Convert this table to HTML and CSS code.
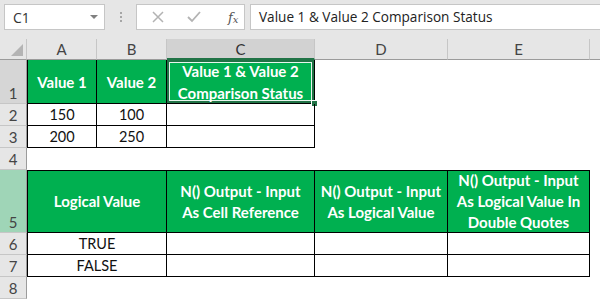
FILE: index.html
```html
<!DOCTYPE html>
<html>
<head>
<meta charset="utf-8">
<link rel="stylesheet" href="styles.css">
</head>
<body>
<div class="app">
  <div class="toolbar">
    <div class="namebox"><span class="name">C1</span><span class="dd"></span></div>
    <div class="grip"><i></i><i></i><i></i></div>
    <div class="btns">
      <svg class="ico" width="14" height="14" viewBox="0 0 14 14"><path d="M2 2 L12 12 M12 2 L2 12" stroke="#b3b3b3" stroke-width="1.5" fill="none"/></svg>
      <svg class="ico" width="16" height="14" viewBox="0 0 16 14"><path d="M2 7 L6 11 L14 2" stroke="#b3b3b3" stroke-width="1.8" fill="none"/></svg>
      <span class="fx">f<sub>x</sub></span>
    </div>
    <div class="formula">Value 1 &amp; Value 2 Comparison Status</div>
  </div>
  <div class="sheet">
    <div class="corner"><span class="tri"></span></div>
    <div class="ch">A</div>
    <div class="ch">B</div>
    <div class="ch sel">C</div>
    <div class="ch">D</div>
    <div class="ch">E</div>
    <div class="ch last"></div>

    <div class="rh rsel">1</div>
    <div class="c g la">Value 1</div>
    <div class="c g">Value 2</div>
    <div class="c g active">Value 1 &amp; Value 2<br>Comparison Status<span class="handle"></span></div>
    <div class="e"></div><div class="e"></div><div class="e"></div>

    <div class="rh">2</div>
    <div class="c la">150</div>
    <div class="c">100</div>
    <div class="c"></div>
    <div class="e"></div><div class="e"></div><div class="e"></div>

    <div class="rh">3</div>
    <div class="c la">200</div>
    <div class="c">250</div>
    <div class="c"></div>
    <div class="e"></div><div class="e"></div><div class="e"></div>

    <div class="rh">4</div>
    <div class="e span6"></div>

    <div class="rh rgreen">5</div>
    <div class="c g la t span2">Logical Value</div>
    <div class="c g t">N() Output - Input<br>As Cell Reference</div>
    <div class="c g t">N() Output - Input<br>As Logical Value</div>
    <div class="c g t">N() Output - Input<br>As Logical Value In<br>Double Quotes</div>
    <div class="e"></div>

    <div class="rh">6</div>
    <div class="c la span2">TRUE</div>
    <div class="c"></div><div class="c"></div><div class="c"></div>
    <div class="e"></div>

    <div class="rh">7</div>
    <div class="c la span2">FALSE</div>
    <div class="c"></div><div class="c"></div><div class="c"></div>
    <div class="e"></div>

    <div class="rh">8</div>
    <div class="e span6"></div>
  </div>
</div>
</body>
</html>
```
FILE: styles.css
```css
* { box-sizing: border-box; }
html, body { margin: 0; padding: 0; }
body { width: 600px; height: 299px; overflow: hidden; background: #fff; font-family: Lato, "Liberation Sans", sans-serif; }
.app { width: 600px; height: 299px; display: flex; flex-direction: column; }

.toolbar { height: 39px; background: #e6e6e6; display: flex; align-items: flex-start; padding-top: 4px; padding-left: 4px; }
.namebox { width: 101px; height: 26px; background: #fff; border: 1px solid #c6c6c6; display: flex; align-items: center; justify-content: space-between; padding: 0 6px 0 8px; }
.name { font-family: "Open Sans", sans-serif; font-size: 14px; color: #333; }
.dd { width: 0; height: 0; border-left: 4px solid transparent; border-right: 4px solid transparent; border-top: 4px solid #808080; }
.grip { width: 31px; height: 26px; display: flex; flex-direction: column; align-items: center; justify-content: center; gap: 2px; }
.grip i { display: block; width: 2px; height: 2px; background: #a6a6a6; }
.btns { width: 109px; height: 26px; background: #fff; border: 1px solid #c6c6c6; display: flex; align-items: center; padding-left: 14px; }
.btns .ico { margin-right: 21px; }
.btns .ico + .ico { margin-right: 26px; }
.fx { font-family: "DejaVu Serif", serif; font-style: italic; font-size: 13px; color: #555; }
.fx sub { font-size: 10px; vertical-align: -1px; }
.formula { margin-left: 5px; flex: 1; height: 26px; background: #fff; border: 1px solid #c6c6c6; border-right: none; font-family: "Open Sans", sans-serif; font-size: 13.6px; color: #222; padding-left: 8px; line-height: 23px; }

.sheet { flex: 1; display: grid; grid-template-columns: 27px 70px 70px 148px 133px 142px 10px; grid-template-rows: 21px 44px 22px 22px 22px 63px 22px 22px 22px; }
.corner { background: #e6e6e6; border-right: 1px solid #c6c6c6; border-bottom: 1px solid #9b9b9b; position: relative; }
.tri { position: absolute; right: 3px; bottom: 3px; width: 0; height: 0; border-left: 12px solid transparent; border-bottom: 12px solid #b4b4b4; }
.ch { background: #e6e6e6; border-right: 1px solid #c6c6c6; border-bottom: 1px solid #9b9b9b; text-align: center; font-size: 15px; color: #444; line-height: 21px; }
.ch.sel { background: #d2d2d2; border-bottom: 2px solid #217346; color: #333; }
.ch.last { border-right: none; }
.rh { background: #e6e6e6; border-right: 1px solid #9b9b9b; border-bottom: 1px solid #c6c6c6; text-align: center; font-size: 15px; color: #444; display: flex; align-items: flex-end; justify-content: center; line-height: 20px; }
.rh.rsel { background: #d6d6d6; }
.rh.rgreen { background: #9fd5b7; }

.c { border-right: 1px solid #000; border-bottom: 1px solid #000; display: flex; align-items: center; justify-content: center; text-align: center; font-size: 14.5px; color: #111; position: relative; }
.c.la { border-left: 1px solid #000; }
.c.t { border-top: 1px solid #000; }
.c.g { background: #00b050; color: #fff; font-weight: bold; font-size: 15px; line-height: 22px; }
.c.g.t { line-height: 21px; }
.span2 { grid-column: span 2; }
.span6 { grid-column: span 6; }
.active { box-shadow: inset 0 0 0 2px #217346, inset 0 0 0 3px #e8f5ed; }
.handle { position: absolute; right: -4px; bottom: -4px; width: 7px; height: 7px; background: #217346; border: 1px solid #fff; }
```
